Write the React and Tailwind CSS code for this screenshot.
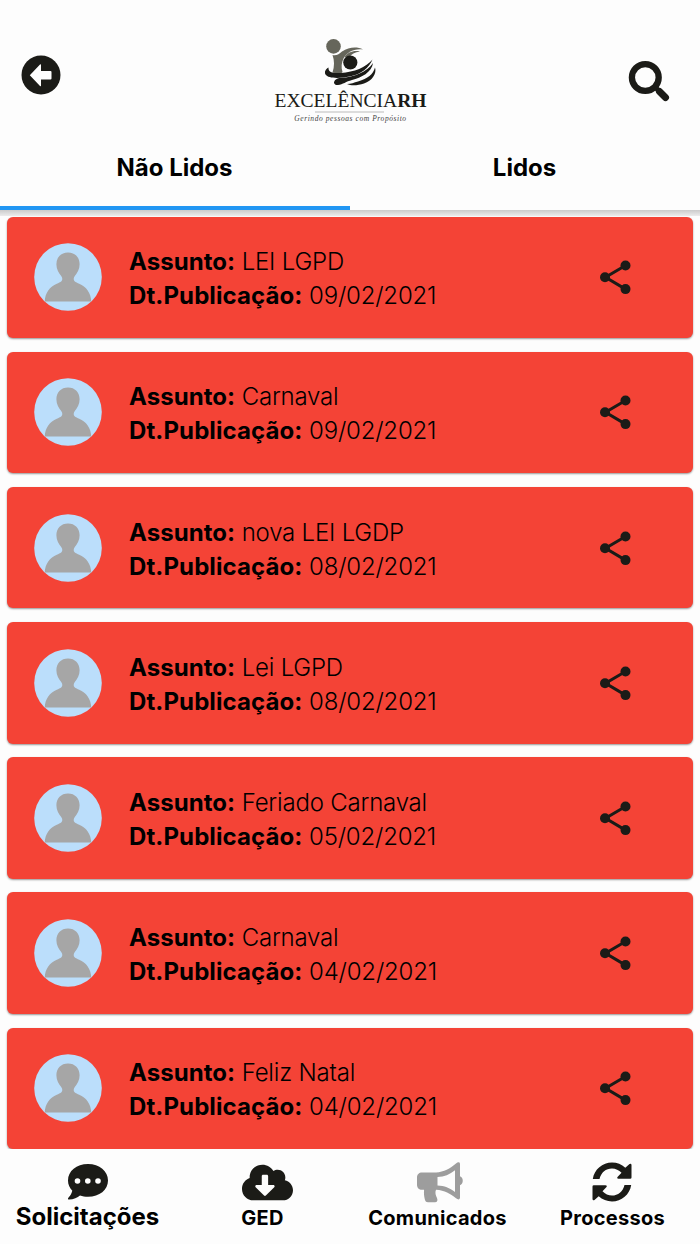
import { useState } from 'react'
import { FaCloudDownloadAlt } from 'react-icons/fa'

const MESSAGES = [
  { id: 1, subject: 'LEI LGPD', date: '09/02/2021' },
  { id: 2, subject: 'Carnaval', date: '09/02/2021' },
  { id: 3, subject: 'nova LEI LGDP', date: '08/02/2021' },
  { id: 4, subject: 'Lei LGPD', date: '08/02/2021' },
  { id: 5, subject: 'Feriado Carnaval', date: '05/02/2021' },
  { id: 6, subject: 'Carnaval', date: '04/02/2021' },
  { id: 7, subject: 'Feliz Natal', date: '04/02/2021' }
]

function BackIcon() {
  return (
    <svg viewBox="0 0 40 40" className="w-10 h-10">
      <circle cx="20" cy="20" r="19.5" fill="#1b1b17" />
      <path d="M8.800 20.200 19 9.500q1-.8 1 .5v6h9.500q1 0 1 1v6.500q0 1-1 1H20v6q0 1.300-1 .4Z" fill="#fff" />
    </svg>
  )
}

function SearchIcon() {
  return (
    <svg viewBox="0 0 42 42" className="w-[42px] h-[42px]" fill="none" stroke="#1b1b17">
      <circle cx="17.300" cy="17.500" r="13.400" strokeWidth="6.300" />
      <path d="M27 27l3 3" strokeWidth="5" />
      <path d="M31.500 31.500l6 6" strokeWidth="7" strokeLinecap="round" />
    </svg>
  )
}

function Logo() {
  return (
    <svg viewBox="0 0 160 84" className="w-40 h-[84px]">
      <g transform="translate(50 0)">
        <g fill="#66665b">
          <circle cx="13.500" cy="11.400" r="7.300" />
          <path d="M12.500 20c4 1 6.500-1 9.500-3.500 7-4.500 15-5 21-2-10-1-16 3-19.500 9-2 4-2.500 9-1 13.500l-2 2-8-1.500c2-6 2-12 0-17.500Z" />
          <path d="M24.500 22c3-4.500 9-7 15.500-5.500-5 .5-9 3-11 6-1.500-.7-3-.7-4.500-.5Z" />
        </g>
        <g fill="#1b1b17">
          <circle cx="30.300" cy="27.500" r="7.100" />
          <path d="M8.500 32.500c-.5 5 5 6 12.500 5.500 13-1 25-5.500 31.500-13.500-4 9-11 14-21 16.500-10 2.500-23 3-26-1.500-1.500-3 .5-5.500 3-7Z" />
          <path d="M14 48c0-3 3-5 7-5 13-1 26-6 32-15-1 9-12 15-21 17-6 1.500-9 4.500-14 5-2 .3-3.500-.5-4-2Z" />
          <path d="M27 49c4 0 7-1.500 11-2.500 10-3 15-7 17-14 2 6-3 13.500-11 16-6 2-13 2.500-17 .5Z" />
        </g>
      </g>
      <text x="4.500" y="71.700" fontFamily="Liberation Serif, serif" fontSize="19.200" fill="#1b1b17" textLength="152" lengthAdjust="spacingAndGlyphs">
        EXCELÊNCIA<tspan fontWeight="bold">RH</tspan>
      </text>
      <path d="M45 77h69" stroke="#aaa" strokeWidth=".8" />
    </svg>
  )
}

function Avatar() {
  return (
    <svg viewBox="0 0 68 68" className="w-[68px] h-[68px] shrink-0">
      <circle cx="34" cy="34" r="33.800" fill="#bbdefb" />
      <path
        d="M34 9.500c-7 0-11.600 4.800-11.600 11.800 0 5 2.200 8.700 4.800 11.700 1.500 2 1.400 4 .2 5.200-1 1-3 1.800-4.600 2.500C16 43.500 10.800 50 10.800 58.500h46.400c0-8.500-5.200-15-12-17.800-1.600-.7-3.600-1.500-4.600-2.500-1.200-1.200-1.300-3.200.2-5.200 2.600-3 4.800-6.700 4.800-11.700C45.600 14.300 41 9.500 34 9.500Z"
        fill="#a6a6a6"
      />
    </svg>
  )
}

function ShareIcon() {
  return (
    <svg viewBox="0 0 32 36" className="w-8 h-9" fill="#1b1b17">
      <path d="M25.500 6.500 5.500 18.300l20 11.800" fill="none" stroke="#1b1b17" strokeWidth="3" />
      <circle cx="5" cy="18.300" r="5" />
      <circle cx="25.500" cy="6.500" r="5" />
      <circle cx="25.500" cy="30.100" r="5" />
    </svg>
  )
}

function CommentIcon() {
  return (
    <svg viewBox="0 0 42 38" className="w-[42px] h-[38px]">
      <path d="M21 1C9.500 1 1 8 1 17.500c0 4 1.600 7.500 4.300 10.200C4.500 31 2.800 33 1.200 35c-.6.900-.2 1.500.8 1.500 4.700 0 8.500-2.200 11-4 2.500.8 5 1.300 8 1.300 11.500 0 20-7 20-16.300S32.500 1 21 1Z" fill="#1b1b17" />
      <g fill="#fff">
        <circle cx="10.500" cy="18" r="2.800" />
        <circle cx="20.800" cy="18" r="2.800" />
        <circle cx="31" cy="18" r="2.800" />
      </g>
    </svg>
  )
}

function MegaphoneIcon() {
  return (
    <svg viewBox="0 0 48 42" className="w-12 h-[42px]">
      <path
        fillRule="evenodd"
        d="M6 11.500h14c8-.5 14-4 20-9 2-1.700 4-1.700 4 .8v12c3.700 1.500 3.700 7.500 0 9v12c0 2.500-1.800 2.700-4 1C34 32.500 29 29.500 20 28.800c-1.200 2.700-.3 5.700 1 8.200 1 2.500.3 4.200-2 4.200h-7c-2 0-2.700-1-3.200-3-.8-3.500-1.100-6.500-.7-9.500H6c-3 0-5-2-5-5v-7.200c0-3 2-5 5-5ZM21.500 16v8.500c7 .4 12 2.200 17.500 6.500V9.300c-5.300 4.300-10.700 6.500-17.500 6.700Z"
        fill="#9d9d9d"
      />
    </svg>
  )
}

function SyncIcon() {
  const half = 'M.8 17C2.200 7.500 10.500.5 20 .5c5 0 9.700 1.900 13.300 5.200L37.500 2q1.800-1 2 1v12.500q0 1.300-1.300 1.300H26.500q-2 0-1-1.700l4-4.300C27 8 23.500 6.400 20 6.400c-6 0-11 4-12.500 10.600Z'
  return (
    <svg viewBox="0 0 40 40" className="w-10 h-10" fill="#1b1b17">
      <path d={half} />
      <path d={half} transform="rotate(180 20 20)" />
    </svg>
  )
}

function MessageCard({ message }) {
  return (
    <li className="flex items-center h-[121.5px] shrink-0 pl-[27px] pr-[61px] rounded-md bg-[#f44336] shadow-[0_1px_2px_rgba(0,0,0,0.4)]">
      <Avatar />
      <div className="flex-1 ml-[27px] mt-1 text-[24px] leading-[34px] font-light tracking-[-0.2px] text-black whitespace-nowrap">
        <p><b className="font-bold tracking-[0.05px]">Assunto:</b> {message.subject}</p>
        <p><b className="font-bold tracking-[0.1px]">Dt.Publicação:</b> {message.date}</p>
      </div>
      <button aria-label="Compartilhar"><ShareIcon /></button>
    </li>
  )
}

export default function App() {
  const [tab, setTab] = useState('unread')

  return (
    <div className="flex flex-col w-[700px] h-[1244px] overflow-hidden bg-[#fdfdfd] text-black font-['Inter',sans-serif]">
      <header className="h-[210px] shrink-0 flex flex-col">
        <div className="h-[126px] flex items-start justify-between pl-[21px] pr-[30px]">
          <button className="mt-[54.5px]" aria-label="Voltar"><BackIcon /></button>
          <div className="flex flex-col items-center mt-[35px] pl-[11px]">
            <Logo />
            <span className="-mt-[5.5px] pl-px font-['Liberation_Serif',serif] italic text-[7.5px] leading-[10px] tracking-[0.57px] text-[#444] whitespace-nowrap">
              Gerindo pessoas com Propósito
            </span>
          </div>
          <button className="mt-[60px]" aria-label="Buscar"><SearchIcon /></button>
        </div>
        <nav className="flex flex-1 text-[24px] font-bold">
          <button
            onClick={() => setTab('unread')}
            className={`w-1/2 pt-[3px] pr-px border-b-4 ${tab === 'unread' ? 'border-[#2196f3]' : 'border-transparent'}`}
          >
            Não Lidos
          </button>
          <button
            onClick={() => setTab('read')}
            className={`w-1/2 pt-[3px] pr-px border-b-4 ${tab === 'read' ? 'border-[#2196f3]' : 'border-transparent'}`}
          >
            Lidos
          </button>
        </nav>
      </header>
      <div className="h-1.5 shrink-0 bg-linear-to-b from-[#cbcbcb] to-[#ececec]" />

      <ul className="h-[933px] shrink-0 overflow-hidden flex flex-col gap-[13.7px] px-[7px] pt-[0.5px]">
        {MESSAGES.map(m => <MessageCard key={m.id} message={m} />)}
      </ul>

      <footer className="flex-1 grid grid-cols-4 text-center font-bold text-[20px] leading-6 tracking-[0.3px]">
        <div className="flex flex-col items-center pt-3.5">
          <CommentIcon />
          <span className="mt-1 text-[24px] tracking-[0px]">Solicitações</span>
        </div>
        <div className="flex flex-col items-center pt-[13px]">
          <FaCloudDownloadAlt className="w-[51px] h-[41px] ml-2.5 text-[#1b1b17]" />
          <span className="mt-[3px]">GED</span>
        </div>
        <div className="flex flex-col items-center pt-3">
          <span className="ml-[5px]"><MegaphoneIcon /></span>
          <span className="mt-[3px]">Comunicados</span>
        </div>
        <div className="flex flex-col items-center pt-[13px]">
          <span className="mr-px"><SyncIcon /></span>
          <span className="mt-1">Processos</span>
        </div>
      </footer>
    </div>
  )
}
